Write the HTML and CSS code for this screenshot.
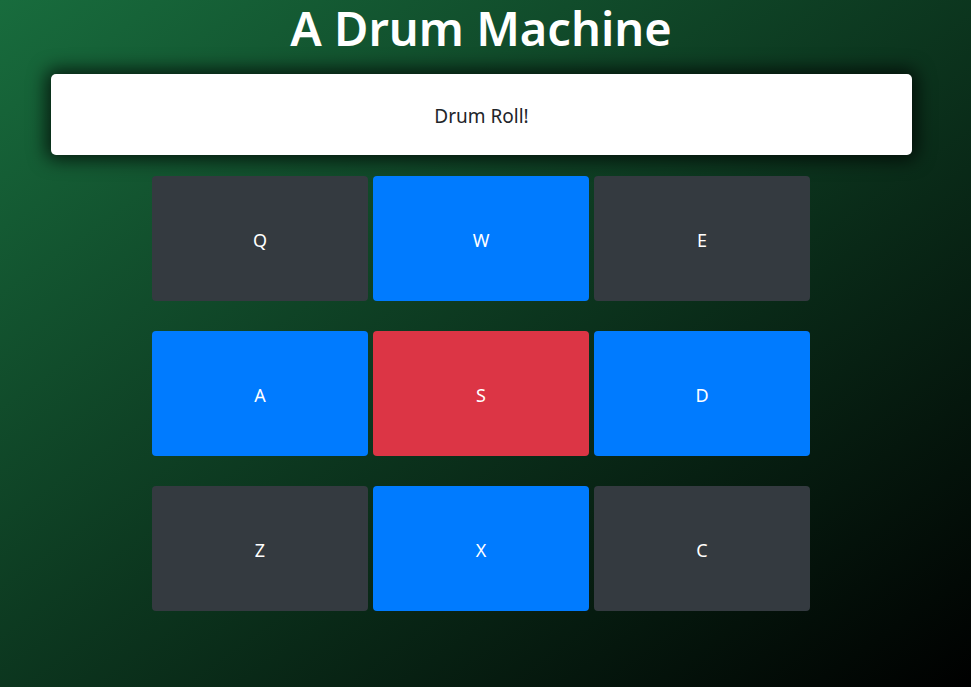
FILE: index.html
```html
<!DOCTYPE html>
<html lang="en">
<head>
<meta charset="utf-8">
<title>A Drum Machine</title>
<link rel="stylesheet" href="styles.css">
</head>
<body>
<div class="page">
  <h1 class="title">A Drum Machine</h1>
  <div class="display-card">Drum Roll!</div>
  <div class="pad-grid">
    <div class="pad pad-dark">Q</div>
    <div class="pad pad-blue">W</div>
    <div class="pad pad-dark">E</div>
    <div class="pad pad-blue">A</div>
    <div class="pad pad-red">S</div>
    <div class="pad pad-blue">D</div>
    <div class="pad pad-dark">Z</div>
    <div class="pad pad-blue">X</div>
    <div class="pad pad-dark">C</div>
  </div>
</div>
</body>
</html>
```
FILE: styles.css
```css
html, body {
  margin: 0;
  padding: 0;
  height: 100%;
}
body {
  background: linear-gradient(to bottom right, #186c3d 0%, #000000 100%);
  font-family: "Noto Sans", "Open Sans", "Liberation Sans", sans-serif;
  color: #212529;
  overflow: hidden;
}
.page {
  width: 962px;
  display: flex;
  flex-direction: column;
  align-items: center;
}
.title {
  margin: 0;
  padding-top: 8px;
  height: 66px;
  font-size: 47px;
  font-weight: 600;
  line-height: 40px;
  color: #ffffff;
  text-align: center;
}
.display-card {
  box-sizing: border-box;
  width: 861px;
  height: 81px;
  margin-left: 1px;
  background: #ffffff;
  border-radius: 5px;
  box-shadow: 0 0 18px 5px rgba(0, 0, 0, 0.7);
  display: flex;
  align-items: center;
  justify-content: center;
  padding-top: 2px;
  font-size: 19px;
  color: #212529;
}
.pad-grid {
  margin-top: 21px;
  display: grid;
  grid-template-columns: repeat(3, 216px);
  grid-auto-rows: 125px;
  column-gap: 5px;
  row-gap: 30px;
}
.pad {
  border-radius: 4px;
  display: flex;
  align-items: center;
  justify-content: center;
  padding-top: 2px;
  color: #ffffff;
  font-size: 18px;
}
.pad-dark { background: #343a40; }
.pad-blue { background: #007bff; }
.pad-red { background: #dc3545; }
```
